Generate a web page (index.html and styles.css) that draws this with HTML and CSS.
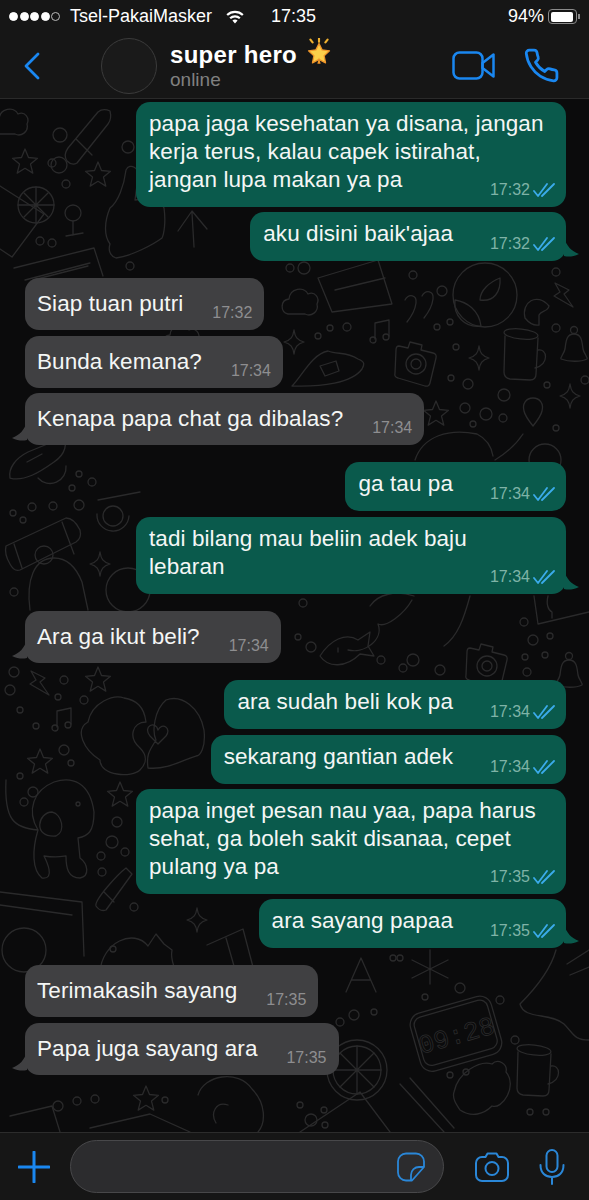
FILE: index.html
```html
<!DOCTYPE html>
<html lang="en">
<head>
    <meta charset="UTF-8">
    <title>super hero</title>
    <link rel="stylesheet" href="styles.css">
</head>
<body>
<div class="phone">
    <header class="top">
        <div class="status">
            <div class="signal"><i></i><i></i><i></i><i></i><i class="off"></i></div>
            <span class="carrier">Tsel-PakaiMasker</span>
            <svg class="wifi" viewBox="0 0 18 14"><path d="M9 13.500 6.400 10.600a3.800 3.800 0 0 1 5.200 0zM4.900 9 3.400 7.400a8.200 8.200 0 0 1 11.200 0L13.100 9a6 6 0 0 0-8.200 0zM1.900 5.800.4 4.200a12.600 12.600 0 0 1 17.200 0l-1.500 1.600a10.400 10.400 0 0 0-14.200 0z" fill="#fff"/></svg>
            <span class="clock">17:35</span>
            <span class="level">94%</span>
            <div class="battery"><div class="charge"></div></div>
            <div class="nub"></div>
        </div>
        <nav class="bar">
            <svg class="back" viewBox="0 0 18 28"><path d="M15 2 3 14l12 12" fill="none" stroke="#1a87f0" stroke-width="2.800" stroke-linecap="round" stroke-linejoin="round"/></svg>
            <div class="avatar"></div>
            <div class="who">
                <div class="name">super hero
                    <svg class="glow" viewBox="0 0 28 26">
                        <path d="M14 5l2.900 6 6.900.9-5 4.600 1.300 6.700-6.100-3.300-6.100 3.300 1.300-6.700-5-4.600 6.900-.9z" fill="#fcd04a" stroke="#f0962a" stroke-width="1.200" stroke-linejoin="round"/>
                        <path d="M14 18l-1.500 6h3z" fill="#f0962a"/>
                        <path d="M14 .5v3M6 1.500l2 2.600M22 1.500l-2 2.600" stroke="#efb02f" stroke-width="2" stroke-linecap="round"/>
                    </svg>
                </div>
                <div class="state">online</div>
            </div>
            <svg class="video" viewBox="0 0 43 29" fill="none" stroke="#1a87f0" stroke-width="2.500" stroke-linejoin="round"><rect x="1.500" y="1.500" width="29" height="26" rx="6"/><path d="M30.500 12 41.500 3.500v22L30.500 17z"/></svg>
            <svg class="call" viewBox="0 0 24 24"><path d="M22 16.920v3a2 2 0 0 1-2.180 2 19.790 19.790 0 0 1-8.630-3.070 19.500 19.500 0 0 1-6-6 19.790 19.790 0 0 1-3.070-8.670A2 2 0 0 1 4.110 2h3a2 2 0 0 1 2 1.720c.13.96.36 1.900.7 2.810a2 2 0 0 1-.45 2.110L8.090 9.910a16 16 0 0 0 6 6l1.270-1.270a2 2 0 0 1 2.110-.45c.91.34 1.850.57 2.810.7A2 2 0 0 1 22 16.920z" fill="none" stroke="#1a87f0" stroke-width="1.800" stroke-linejoin="round"/></svg>
        </nav>
    </header>

    <main class="chat">
        <svg class="doodles" viewBox="0 99 589 1033" fill="none" stroke="#2a2a2b" stroke-width="1.300" stroke-linecap="round" stroke-linejoin="round">
            <defs>
                <path id="star" d="M13 1l3.500 8.500 9 .8-7 5.800 2.300 9-7.800-4.800-7.800 4.800 2.300-9-7-5.800 9-.8z"/>
                <path id="spark" d="M12 0c1 7 3 10 10 12-7 2-9 5-10 12-1-7-3-10-10-12 7-2 9-5 10-12z"/>
                <path id="bolt" d="M3 1l14 7-5 4 9 13-19-11 6-4z"/>
                <g id="camera"><path d="M5 8l9 2 2-6 12 3-1 5 12 3q4 1 3 5l-6 25q-1 4-5 3L4 40q-4-1-3-5L2 12q0-4 3-4z"/><circle cx="22" cy="26" r="10"/><circle cx="22" cy="26" r="5"/></g>
                <g id="bell"><circle cx="14" cy="4" r="3.500"/><path d="M14 8c-8 0-8 8-9 15-1 5-5 8-4 10 8 3 20 3 26 0 1-2-3-5-4-10-1-7-1-15-9-15z"/></g>
                <g id="mug"><ellipse cx="18" cy="6" rx="17" ry="5" transform="rotate(6 18 6)"/><path d="M2 8l-1 36q0 6 6 7l20 1q6 0 6-6l2-36"/><path d="M35 22c9-2 12 14-3 18"/></g>
                <g id="note"><path d="M5 19V3l14-3v16"/><circle cx="3" cy="20" r="3"/><circle cx="16" cy="17" r="3"/></g>
                <path id="cloud" d="M6 30C-2 28-2 16 7 15 8 4 22 2 26 10c7-3 12 4 9 10 2 8-6 13-12 10z"/>
                <path id="pin" d="M10 0c7 0 11 6 9 13-1 5-5 10-9 15C6 23 2 18 1 13-1 6 3 0 10 0z"/>
            </defs>

            <use href="#cloud" x="-8" y="104"/><use href="#cloud" x="282" y="284"/><use href="#cloud" x="163" y="320"/>
            <path d="M68 148l30-36q5-4 12-1 2 8-2 13l-31 39q-5 3-10-2-4-6 1-13zM76 139l16 16"/>
            <use href="#star" x="12" y="148"/><use href="#star" x="85" y="161"/><use href="#star" x="423" y="400"/><use href="#star" x="85" y="666"/><use href="#star" x="27" y="748"/><use href="#star" x="107" y="781"/><use href="#star" x="133" y="1085"/>
            <path d="M0 186l44 28-32 43-12-8"/><circle cx="36" cy="205" r="18"/><path d="M36 187v36M18 205h36M24 193l24 24M48 193l-24 24"/>
            <circle cx="73" cy="213" r="8"/><path d="M73 221v14M66 236l17-3"/>
            <path d="M110 208c8-6 14-22 16-38 4-8 14-2 12 8l-3 22c12-2 26 0 29 8 2 14 0 26-2 30-8 6-30 18-46 20-6-2-8-8-6-14-6-8-6-22 0-36z"/>
            <path d="M178 231l14-20 15 18M192 213l2 34"/>
            <path d="M14 268l80-20 9 28M25 280l65-17M33 280l55-14"/>
            <path d="M318 278l60-18 14 44-60 8zM335 290l50-12"/>
            <path d="M405 300c4-7 12-5 11 3-1 8-5 14-9 19M422 296c4-7 12-5 11 3-1 8-5 14-9 19"/>
            <circle cx="485" cy="295" r="32"/><path d="M480 300c0-10 10-18 20-22 1 14-6 24-20 22zM455 300c12 2 24 10 26 26-16 2-28-10-26-26z"/>
            <use href="#bolt" x="552" y="282"/><path d="M525 318c-4-16 12-26 24-12-1 6-8 4-10 9l0 10c-6 1-10-2-14-7z"/>
            <use href="#spark" x="282" y="330"/><use href="#note" x="370" y="320"/>
            <path d="M292 386c10-10 20-32 36-35 10 4 18 0 30 8 8 3 6 6 4 10-10 14-40 18-70 17zM320 366l16-5 3 10-14 5z"/>
            <use href="#camera" x="394" y="338"/><use href="#spark" x="467" y="346"/><use href="#mug" x="503" y="328"/><use href="#bell" x="560" y="326"/><use href="#spark" x="558" y="384"/><use href="#pin" x="523" y="398"/>
            <path d="M415 460c8-24 34-32 62-26 8 4 14 10 16 22M495 460c10-6 20-14 28-26"/><circle cx="545" cy="460" r="16"/>
            <path d="M10 478c-2-10 6-20 18-26l34-14c6 4 4 16-8 24-14 10-30 20-44 16zM27 462l15-8M38 478a16 16 0 0 0 28-12"/>
            <path d="M98 500l42-8M97 514a16 16 0 1 0 32 2"/><circle cx="113" cy="516" r="10"/>
            <path d="M6 546l60-28q8 0 14 12 2 8-4 12l-56 28q-6 2-10-6-6-10-4-18zM62 522l12 32M14 544l8 24"/><circle cx="44" cy="555" r="9"/>
            <path d="M30 610c-4-30 4-52 24-52 16 0 24 14 28 24l6 28"/><use href="#spark" x="88" y="552"/>
            <circle cx="128" cy="590" r="22"/><path d="M370 606c8-12 26-16 44-10M412 600c-8 14-26 28-34 24 6 16-14 30-30 26M470 596c-6 22-12 40-26 50"/>
            <path d="M320 656c10-16 26-24 38-16l12-8-2 14 6 10-14-2c-14 14-32 14-40 2zM338 648v4"/>
            <use href="#camera" x="465" y="640"/><use href="#bell" x="555" y="652"/><path d="M534 596l4 28 51-12M548 596c-2 8 0 14 4 16v6"/>
            <use href="#bolt" x="28" y="670"/><use href="#note" x="52" y="708"/>
            <path d="M140 770c-8 8-40 6-40-10-16-10-26-30-12-38 4-20 26-28 36-24 12 2 20 8 22 24-14 0-18 16-6 26 8 8 6 16 0 22zM148 768c-2-14 2-18 8-28-4-8-2-30 10-40 16-6 34 8 38 30 2 18-4 26-8 26-14 4-28 14-48 12zM150 736c-8-10 6-16 8-6 4-8 14-2 8 6l-8 8z"/>
            <path d="M6 780c-2 40 8 48 32 50M38 830c-6 20-6 40 4 48 14 2 4-18 2-22 14 2 20 0 22 0 0 12 2 22 14 22 10-2 8-14 0-20l-2-20c10-2 16-6 16-26-4-30-22-36-40-30-20 8-28 28-16 48zM52 812c-14 0-20 26 4 24 10-4 6-22-4-24z"/>
            <circle cx="78" cy="804" r="2"/>
            <path d="M96 906c-2-6 22-32 30-38l6 6-26 36q-6 2-10-4zM104 892l10 10"/>
            <path d="M0 892l82 10 2 54M0 905l72 10"/><circle cx="24" cy="950" r="22"/>
            <path d="M100 972c2-30 34-44 48-26l8-12 8 10 8 6c-2 10 2 14 4 24"/><circle cx="113" cy="949" r="3"/><use href="#spark" x="185" y="908"/>
            <path d="M207 945l36-16 10 38M226 938l8 28"/>
            <path d="M346 992l15-34 15 34M352 980h18"/><path d="M430 950v34M412 960l36 18M448 960l-36 18"/>
            <path d="M556 950c-6 22-22 40-36 54 4 16 30 8 44 20 10 10 10 16 25 16"/><path d="M589 950l-22 14M570 975l19-8"/>
            <g transform="rotate(-16 455 1034)"><rect x="418" y="1008" width="76" height="50" rx="8"/><rect x="414" y="1004" width="84" height="60" rx="12"/><text x="456" y="1044" text-anchor="middle" class="digits">09:28</text></g>
            <circle cx="357" cy="1070" r="30"/><circle cx="357" cy="1070" r="24"/><path d="M357 1046v48M333 1070h48M340 1053l34 34M374 1053l-34 34"/>
            <path d="M454 1092c4-20 26-32 38-28 6-6 16 0 14 8 12 14-4 38-14 34-8 8-20 12-32 4-4-6-8-12-6-18z"/><use href="#mug" x="516" y="1044"/>
            <path d="M400 1084l44 48M410 1078l44 50"/><path d="M198 1095c6-20 40-26 54-6 14 14 14 34 6 43M228 1105c-12-4-18 8-12 18"/><path d="M10 1116l42-10 8 26"/>
            <path d="M90 1128l60-14 40 18M300 1132l60-40 30 40"/>

            <g>
                <circle cx="60" cy="135" r="7"/><circle cx="59" cy="165" r="8"/><circle cx="52" cy="163" r="4"/><circle cx="66" cy="184" r="4"/>
                <circle cx="40" cy="241" r="4"/><circle cx="52" cy="243" r="4"/><circle cx="128" cy="147" r="6"/><circle cx="130" cy="266" r="4"/>
                <circle cx="290" cy="268" r="4"/><circle cx="304" cy="268" r="6"/><circle cx="413" cy="275" r="4"/><circle cx="442" cy="291" r="5"/>
                <circle cx="330" cy="328" r="3"/><circle cx="347" cy="327" r="4"/><circle cx="318" cy="336" r="3"/><circle cx="437" cy="327" r="3"/>
                <circle cx="450" cy="322" r="3"/><circle cx="456" cy="347" r="3"/><circle cx="556" cy="272" r="4"/><circle cx="556" cy="328" r="4"/>
                <circle cx="451" cy="378" r="3"/><circle cx="468" cy="384" r="5"/><circle cx="504" cy="395" r="6"/><circle cx="547" cy="385" r="3"/>
                <circle cx="585" cy="380" r="4"/><circle cx="465" cy="408" r="5"/><circle cx="486" cy="414" r="6"/><circle cx="503" cy="418" r="4"/><circle cx="473" cy="424" r="3"/><circle cx="556" cy="428" r="3"/>
                <circle cx="79" cy="474" r="3"/><circle cx="92" cy="482" r="4"/><circle cx="72" cy="488" r="3"/><circle cx="79" cy="505" r="5"/>
                <circle cx="32" cy="507" r="4"/><circle cx="53" cy="506" r="4"/><circle cx="13" cy="513" r="3"/><circle cx="23" cy="520" r="3"/><circle cx="14" cy="592" r="4"/>
                <circle cx="303" cy="603" r="4"/><circle cx="298" cy="637" r="3"/><circle cx="311" cy="647" r="5"/><circle cx="381" cy="660" r="4"/><circle cx="403" cy="668" r="4"/>
                <circle cx="413" cy="660" r="6"/><circle cx="440" cy="670" r="5"/><circle cx="524" cy="622" r="4"/><circle cx="533" cy="640" r="5"/><circle cx="550" cy="636" r="3"/>
                <circle cx="525" cy="657" r="3"/><circle cx="545" cy="655" r="3"/><circle cx="527" cy="672" r="4"/>
                <circle cx="14" cy="672" r="5"/><circle cx="10" cy="690" r="5"/><circle cx="64" cy="680" r="4"/><circle cx="58" cy="697" r="3"/><circle cx="84" cy="700" r="4"/>
                <circle cx="20" cy="710" r="3"/><circle cx="36" cy="726" r="3"/><circle cx="64" cy="750" r="5"/><circle cx="71" cy="763" r="3"/><circle cx="20" cy="776" r="3"/>
                <circle cx="33" cy="792" r="5"/><circle cx="24" cy="802" r="4"/><circle cx="117" cy="822" r="5"/><circle cx="112" cy="842" r="6"/><circle cx="125" cy="852" r="4"/>
                <circle cx="101" cy="856" r="4"/><circle cx="102" cy="872" r="4"/><circle cx="134" cy="907" r="4"/>
                <circle cx="393" cy="958" r="3"/><circle cx="400" cy="958" r="3"/><circle cx="460" cy="988" r="5"/><circle cx="425" cy="997" r="3"/><circle cx="500" cy="1000" r="4"/>
                <circle cx="340" cy="1022" r="4"/><circle cx="354" cy="1015" r="5"/><circle cx="374" cy="1012" r="3"/><circle cx="515" cy="1040" r="4"/>
                <circle cx="58" cy="1106" r="5"/><circle cx="77" cy="1101" r="4"/><circle cx="95" cy="1099" r="4"/><circle cx="165" cy="1100" r="3"/>
                <circle cx="311" cy="1120" r="6"/><circle cx="324" cy="1110" r="3"/><circle cx="300" cy="1105" r="3"/><circle cx="325" cy="1125" r="3"/>
                <circle cx="450" cy="1075" r="3"/><circle cx="466" cy="1072" r="3"/><circle cx="530" cy="1112" r="3"/><circle cx="546" cy="1112" r="3"/>
            </g>
        </svg>

        <svg class="sprites" width="0" height="0"><defs><path id="read" d="M1 8l4 5L14 1M9 13 21 1" fill="none" stroke="#3babea" stroke-width="1.800" stroke-linecap="round" stroke-linejoin="round"/></defs></svg>

        <div class="msg out wide">papa jaga kesehatan ya disana, jangan<br>kerja terus, kalau capek istirahat,<br>jangan lupa makan ya pa<span class="meta"><time>17:32</time><svg class="ticks" viewBox="0 0 24 14"><use href="#read"/></svg></span></div>
        <div class="msg out near tail">aku disini baik'ajaa<span class="gap"></span><span class="meta"><time>17:32</time><svg class="ticks" viewBox="0 0 24 14"><use href="#read"/></svg></span></div>

        <div class="msg in group">Siap tuan putri<span class="gap"></span><span class="meta"><time>17:32</time></span></div>
        <div class="msg in">Bunda kemana?<span class="gap"></span><span class="meta"><time>17:34</time></span></div>
        <div class="msg in near tail">Kenapa papa chat ga dibalas?<span class="gap"></span><span class="meta"><time>17:34</time></span></div>

        <div class="msg out group">ga tau pa<span class="gap"></span><span class="meta"><time>17:34</time><svg class="ticks" viewBox="0 0 24 14"><use href="#read"/></svg></span></div>
        <div class="msg out wide tail">tadi bilang mau beliin adek baju<br>lebaran<span class="meta"><time>17:34</time><svg class="ticks" viewBox="0 0 24 14"><use href="#read"/></svg></span></div>

        <div class="msg in group tail">Ara ga ikut beli?<span class="gap"></span><span class="meta"><time>17:34</time></span></div>

        <div class="msg out group">ara sudah beli kok pa<span class="gap"></span><span class="meta"><time>17:34</time><svg class="ticks" viewBox="0 0 24 14"><use href="#read"/></svg></span></div>
        <div class="msg out">sekarang gantian adek<span class="gap"></span><span class="meta"><time>17:34</time><svg class="ticks" viewBox="0 0 24 14"><use href="#read"/></svg></span></div>
        <div class="msg out near wide">papa inget pesan nau yaa, papa harus<br>sehat, ga boleh sakit disanaa, cepet<br>pulang ya pa<span class="meta"><time>17:35</time><svg class="ticks" viewBox="0 0 24 14"><use href="#read"/></svg></span></div>
        <div class="msg out near tail">ara sayang papaa<span class="gap"></span><span class="meta"><time>17:35</time><svg class="ticks" viewBox="0 0 24 14"><use href="#read"/></svg></span></div>

        <div class="msg in group">Terimakasih sayang<span class="gap"></span><span class="meta"><time>17:35</time></span></div>
        <div class="msg in tail">Papa juga sayang ara<span class="gap"></span><span class="meta"><time>17:35</time></span></div>
    </main>

    <footer class="composer">
        <svg class="plus" viewBox="0 0 32 32"><path d="M16 1v30M1 16h30" stroke="#1a87f0" stroke-width="3" stroke-linecap="round"/></svg>
        <div class="field">
            <svg class="sticker" viewBox="0 0 28 30" fill="none" stroke="#2a87d8" stroke-width="1.800" stroke-linejoin="round"><path d="M9 1.500h10a8 8 0 0 1 8 8V15L15 28.500H9a8 8 0 0 1-8-8v-11a8 8 0 0 1 8-8z"/><path d="M27 15h-5c-4 0-8 3-8 8v5.500"/></svg>
        </div>
        <svg class="snap" viewBox="0 0 34 30" fill="none" stroke="#2a87d8" stroke-width="2"><path d="M7 5h3.500l2-3.500h9l2 3.500H27a6 6 0 0 1 6 6v12a6 6 0 0 1-6 6H7a6 6 0 0 1-6-6V11a6 6 0 0 1 6-6z" stroke-linejoin="round"/><circle cx="17" cy="16.500" r="6.500"/></svg>
        <svg class="mic" viewBox="0 0 26 36" fill="none" stroke="#2a87d8" stroke-width="2" stroke-linecap="round"><rect x="7.500" y="1" width="11" height="22" rx="5.500"/><path d="M1.500 16c0 8 5 12 11.500 12s11.500-4 11.500-12M13 28v7"/></svg>
    </footer>
</div>
</body>
</html>
```

FILE: styles.css
```css
* {
    box-sizing: border-box;
}
body {
    margin: 0;
    background-color: #0b0b0c;
    font-family: "Liberation Sans", Arial, sans-serif;
}
.phone {
    width: 589px;
    height: 1200px;
    display: flex;
    flex-direction: column;
    overflow: hidden;
}

/* header */
.top {
    height: 99px;
    background-color: #161616;
    border-bottom: 1px solid #2a2a2a;
    color: #fff;
    flex: none;
}
.status {
    height: 33px;
    display: flex;
    align-items: center;
    font-size: 18px;
}
.signal {
    display: flex;
    gap: 1.500px;
    margin-left: 9px;
}
.signal i {
    width: 9px;
    height: 9px;
    border-radius: 50%;
    background-color: #fff;
    border: 1px solid #fff;
}
.signal i.off {
    background-color: transparent;
    border-color: #bbb;
}
.carrier {
    margin-left: 10px;
    width: 156px;
}
.wifi {
    width: 18px;
    height: 14px;
}
.clock {
    margin-left: 27px;
    width: 237px;
}
.level {
    width: 40px;
}
.battery {
    width: 29px;
    height: 15px;
    border: 1.500px solid #8a8a8a;
    border-radius: 4px;
    padding: 1.500px;
}
.charge {
    width: 94%;
    height: 100%;
    background-color: #fff;
    border-radius: 2px;
}
.nub {
    width: 2px;
    height: 5px;
    margin-left: 1px;
    background-color: #8a8a8a;
}
.bar {
    height: 65px;
    display: flex;
    align-items: center;
}
.back {
    width: 18px;
    height: 28px;
    margin-left: 23px;
}
.avatar {
    width: 56px;
    height: 56px;
    margin-left: 60px;
    border: 1.500px solid #3b3b3b;
    border-radius: 50%;
    background-color: #1a1a1a;
}
.who {
    margin-left: 13px;
    width: 282px;
}
.name {
    display: flex;
    align-items: center;
    gap: 7px;
    font-size: 24px;
    font-weight: bold;
    line-height: 28px;
    letter-spacing: 0.3px;
}
.glow {
    width: 30px;
    height: 28px;
    margin-top: -5px;
}
.state {
    font-size: 19px;
    line-height: 22px;
    color: #808080;
}
.video {
    width: 43px;
    height: 29px;
}
.call {
    width: 37px;
    height: 37px;
    margin-left: 28px;
}

/* chat */
.chat {
    position: relative;
    flex: 1;
    display: flex;
    flex-direction: column;
    padding: 3px 23px 0 25px;
    background-color: #0b0b0c;
}
.doodles {
    position: absolute;
    left: 0;
    top: 0;
    width: 589px;
    height: 1033px;
}
.sprites {
    position: absolute;
}
.digits {
    font-family: "Liberation Mono", monospace;
    font-size: 26px;
    fill: none;
    stroke: #2a2a2b;
    stroke-width: 0.800;
}
.msg {
    position: relative;
    margin-top: 6px;
    padding: 8px 13px 13px;
    border-radius: 14px;
    color: #f4f6f5;
    font-size: 22.500px;
    letter-spacing: 0.080px;
    line-height: 28px;
    white-space: nowrap;
}
.msg:first-of-type {
    margin-top: 0;
}
.near {
    margin-top: 5px;
}
.group {
    margin-top: 17px;
}
.out {
    align-self: flex-end;
    background-color: #0a5a4c;
}
.in {
    align-self: flex-start;
    background-color: #404042;
    padding: 12px 14px 12px 12px;
}
.wide {
    width: 430px;
}
.gap {
    display: inline-block;
    width: 100px;
}
.in .gap {
    width: 67px;
}
.meta {
    position: absolute;
    right: 9px;
    bottom: 7px;
    display: flex;
    align-items: center;
    gap: 3px;
    font-size: 16px;
    line-height: 20px;
    letter-spacing: 0;
    color: #7fb3a7;
}
.in .meta {
    right: 12px;
    bottom: 7px;
    color: #8e8e90;
}
.ticks {
    width: 24px;
    height: 14px;
}
.tail::after {
    content: "";
    position: absolute;
    bottom: 3px;
    width: 16px;
    height: 20px;
}
.out.tail::after {
    right: -14px;
    background-color: #0a5a4c;
    clip-path: path("M0 0C3 8 7 13 15 16 9 19 4 19 0 18z");
}
.in.tail::after {
    left: -14px;
    background-color: #404042;
    clip-path: path("M16 0C13 8 9 13 1 16 7 19 12 19 16 18z");
}

/* bottom bar */
.composer {
    height: 68px;
    flex: none;
    display: flex;
    align-items: center;
    background-color: #161616;
    border-top: 1px solid #2c2c2c;
    z-index: 1;
}
.plus {
    width: 32px;
    height: 32px;
    margin-left: 18px;
}
.field {
    width: 374px;
    height: 53px;
    margin-left: 20px;
    display: flex;
    align-items: center;
    justify-content: flex-end;
    padding-right: 18px;
    background-color: #2c2c2e;
    border: 1px solid #48484a;
    border-radius: 27px;
}
.sticker {
    width: 28px;
    height: 30px;
}
.snap {
    width: 34px;
    height: 30px;
    margin-left: 31px;
}
.mic {
    width: 26px;
    height: 36px;
    margin-left: 30px;
}
```
